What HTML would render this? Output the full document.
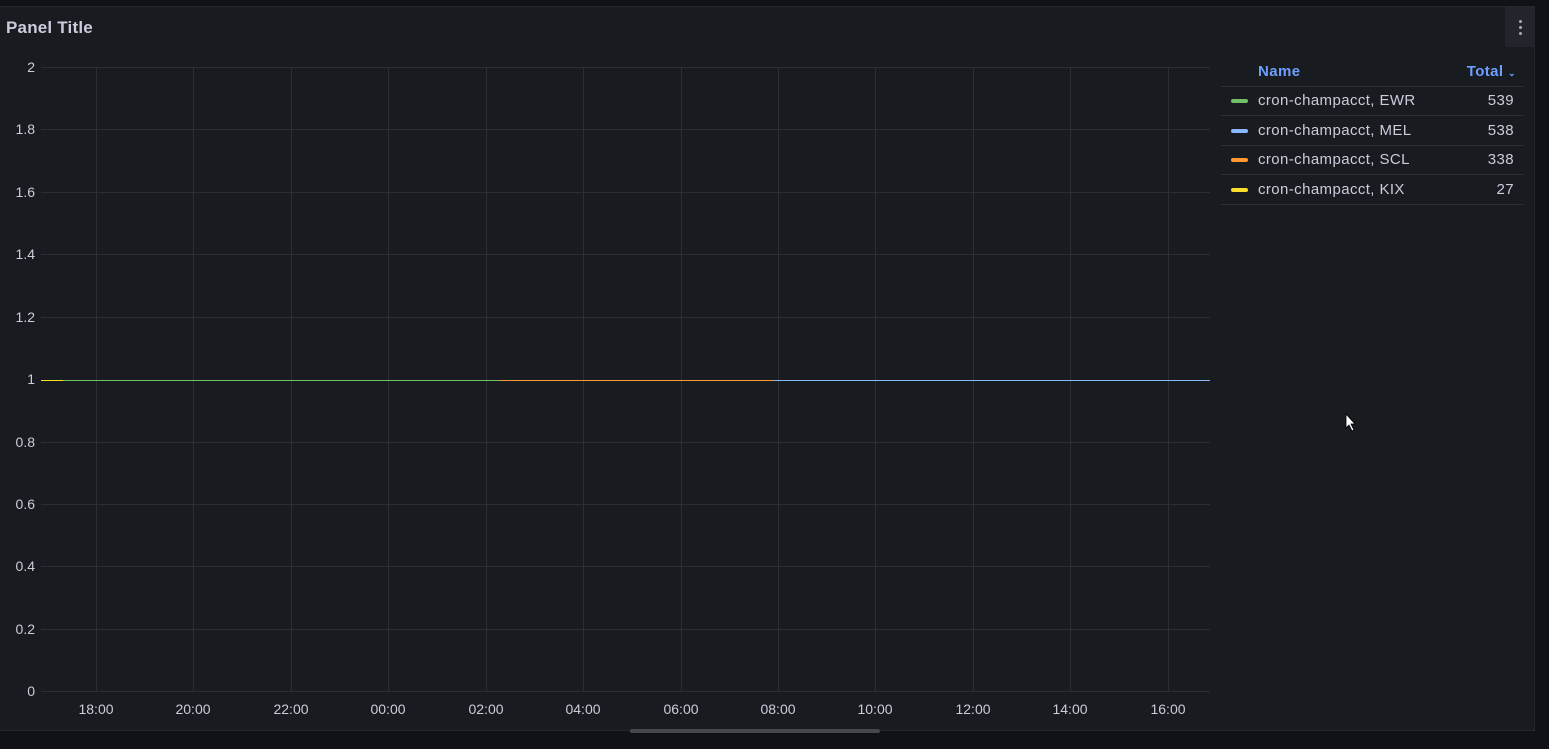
<!DOCTYPE html>
<html><head><style>
body{margin:0;width:1549px;height:749px;background:#111217;overflow:hidden;font-family:"Liberation Sans",sans-serif;position:relative}
.panel{position:absolute;left:0;top:6px;width:1534px;height:723px;background:#181b1f;border:1px solid #25272d;border-left:none}
.title{position:absolute;left:6px;top:18px;color:#ccccdc;font-size:17px;font-weight:bold;letter-spacing:0.2px}
.menu{position:absolute;left:1505px;top:7px;width:30px;height:40px;background:#22252b;border-radius:2px}
.menu i{position:absolute;left:14px;width:3px;height:3px;border-radius:50%;background:#aaa}
.yl{position:absolute;right:1514px;color:#ccccdc;font-size:14px;transform:translateY(-50%)}
.xl{position:absolute;top:701px;color:#ccccdc;font-size:14px;transform:translateX(-50%)}
.lg{position:absolute;left:1221px;width:303px;font-size:15px;color:#ccccdc;letter-spacing:0.4px}
.row{position:absolute;left:0;width:303px;height:29px;border-bottom:1px solid #2c2e33}
.row b{position:absolute;left:10px;top:13px;width:17px;height:4px;border-radius:2px}
.row span{position:absolute;left:37px;top:6px}
.row em{position:absolute;right:10px;top:6px;font-style:normal}
.scroll{position:absolute;left:630px;top:729px;width:250px;height:4px;background:#46484e;border-radius:2px}
</style></head><body>
<div class="panel"></div>
<div class="title">Panel Title</div>
<div class="menu"><i style="top:13px"></i><i style="top:19px"></i><i style="top:25px"></i></div>
<svg style="position:absolute;left:0;top:0" width="1549" height="749">
<g stroke="#2c2e33" stroke-width="1">
<line x1="41" y1="67.5" x2="1210" y2="67.5"/><line x1="41" y1="129.5" x2="1210" y2="129.5"/><line x1="41" y1="192.5" x2="1210" y2="192.5"/><line x1="41" y1="254.5" x2="1210" y2="254.5"/><line x1="41" y1="317.5" x2="1210" y2="317.5"/><line x1="41" y1="442.5" x2="1210" y2="442.5"/><line x1="41" y1="504.5" x2="1210" y2="504.5"/><line x1="41" y1="566.5" x2="1210" y2="566.5"/><line x1="41" y1="629.5" x2="1210" y2="629.5"/><line x1="41" y1="691.5" x2="1210" y2="691.5"/>
<line x1="96.5" y1="67" x2="96.5" y2="691"/><line x1="193.5" y1="67" x2="193.5" y2="691"/><line x1="291.5" y1="67" x2="291.5" y2="691"/><line x1="388.5" y1="67" x2="388.5" y2="691"/><line x1="486.5" y1="67" x2="486.5" y2="691"/><line x1="583.5" y1="67" x2="583.5" y2="691"/><line x1="681.5" y1="67" x2="681.5" y2="691"/><line x1="778.5" y1="67" x2="778.5" y2="691"/><line x1="875.5" y1="67" x2="875.5" y2="691"/><line x1="973.5" y1="67" x2="973.5" y2="691"/><line x1="1070.5" y1="67" x2="1070.5" y2="691"/><line x1="1168.5" y1="67" x2="1168.5" y2="691"/>
</g>
<line x1="41" y1="380.5" x2="63" y2="380.5" stroke="#fade2a"/>
<line x1="63" y1="380.5" x2="500" y2="380.5" stroke="#73bf69"/>
<line x1="500" y1="380.5" x2="773" y2="380.5" stroke="#ff9830"/>
<line x1="773" y1="380.5" x2="1210" y2="380.5" stroke="#8ab8ff"/>
<path d="M1346 414 L1346 428 L1349 425 L1352 431 L1354 430 L1351 424 L1355 424 Z" fill="#fff" stroke="#000" stroke-width="0.8"/>
</svg>
<div class="yl" style="top:67px">2</div><div class="yl" style="top:129px">1.8</div><div class="yl" style="top:192px">1.6</div><div class="yl" style="top:254px">1.4</div><div class="yl" style="top:317px">1.2</div><div class="yl" style="top:379px">1</div><div class="yl" style="top:442px">0.8</div><div class="yl" style="top:504px">0.6</div><div class="yl" style="top:566px">0.4</div><div class="yl" style="top:629px">0.2</div><div class="yl" style="top:691px">0</div>
<div class="xl" style="left:96px">18:00</div><div class="xl" style="left:193px">20:00</div><div class="xl" style="left:291px">22:00</div><div class="xl" style="left:388px">00:00</div><div class="xl" style="left:486px">02:00</div><div class="xl" style="left:583px">04:00</div><div class="xl" style="left:681px">06:00</div><div class="xl" style="left:778px">08:00</div><div class="xl" style="left:875px">10:00</div><div class="xl" style="left:973px">12:00</div><div class="xl" style="left:1070px">14:00</div><div class="xl" style="left:1168px">16:00</div>
<div class="lg" style="top:56px;height:30px;border-bottom:1px solid #2c2e33">
<span style="position:absolute;left:37px;top:7px;color:#6e9fff;font-weight:bold">Name</span>
<span style="position:absolute;right:8px;top:7px;color:#6e9fff;font-weight:bold">Total <span style="font-size:9px">&#8964;</span></span>
</div>
<div class="lg" style="top:86px">
<div class="row" style="top:0"><b style="background:#73bf69"></b><span>cron-champacct, EWR</span><em>539</em></div>
<div class="row" style="top:30px"><b style="background:#8ab8ff"></b><span>cron-champacct, MEL</span><em>538</em></div>
<div class="row" style="top:59px"><b style="background:#ff9830"></b><span>cron-champacct, SCL</span><em>338</em></div>
<div class="row" style="top:89px"><b style="background:#fade2a"></b><span>cron-champacct, KIX</span><em>27</em></div>
</div>
<div class="scroll"></div>
</body></html>
